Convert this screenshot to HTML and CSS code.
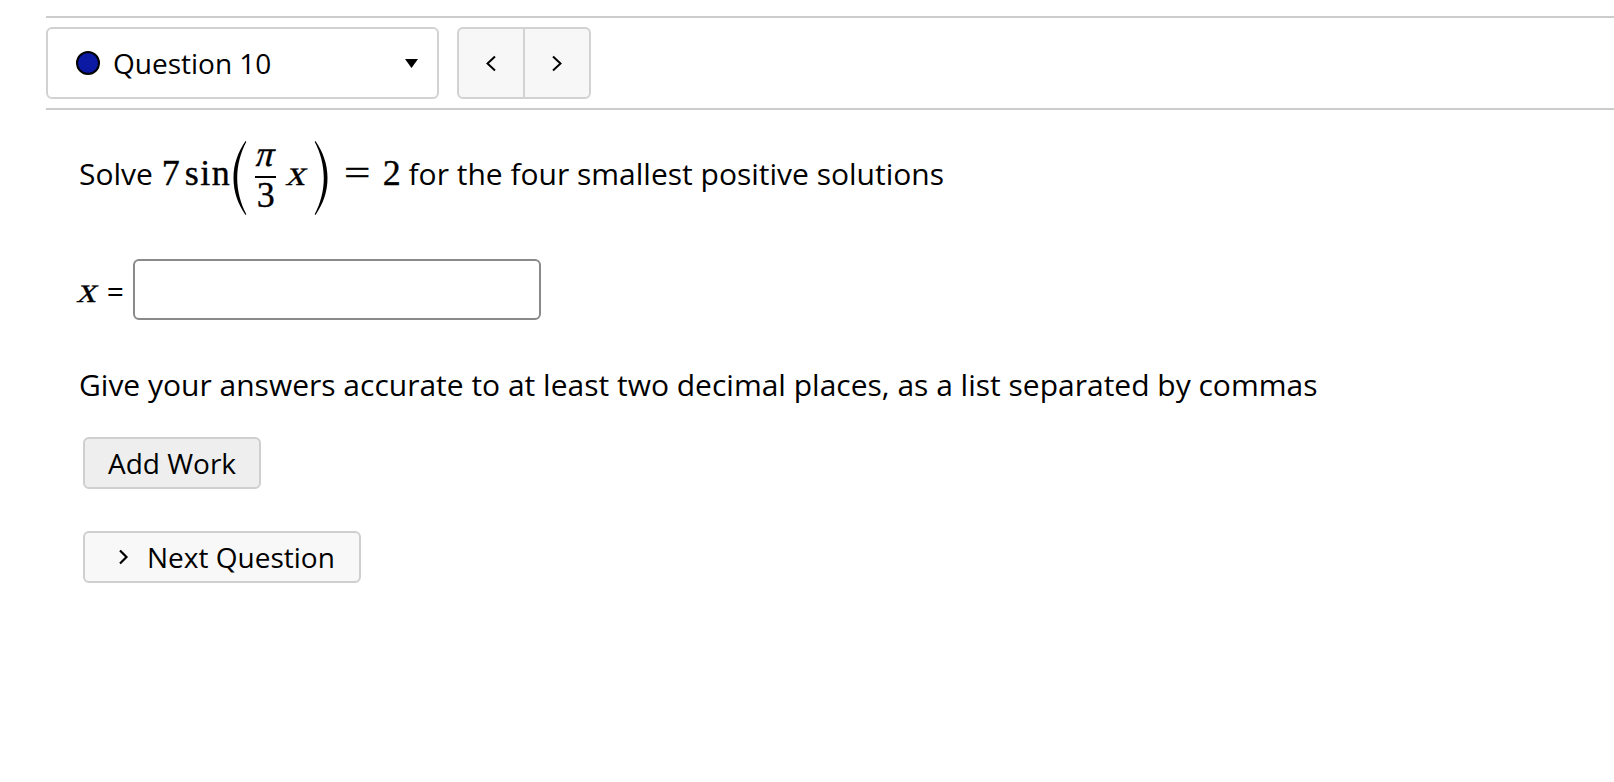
FILE: index.html
```html
<!DOCTYPE html>
<html lang="en">
<head>
<meta charset="utf-8">
<title>Question 10</title>
<link rel="stylesheet" href="styles.css">
</head>
<body>
<div class="page">
  <div class="rule"></div>
  <div class="toolbar">
    <div class="select">
      <span class="dot"></span>
      <span class="select-label">Question 10</span>
      <svg class="caret" width="13" height="9" viewBox="0 0 13 9"><polygon points="0,0 13,0 6.5,9" fill="#000"/></svg>
    </div>
    <div class="nav">
      <button class="nav-btn" type="button" aria-label="Previous">
        <svg width="12" height="17" viewBox="0 0 12 17"><polyline points="10,1.5 2.5,8.5 10,15.5" fill="none" stroke="#000" stroke-width="2"/></svg>
      </button>
      <button class="nav-btn nav-next" type="button" aria-label="Next">
        <svg width="12" height="17" viewBox="0 0 12 17"><polyline points="2,1.5 9.5,8.5 2,15.5" fill="none" stroke="#000" stroke-width="2"/></svg>
      </button>
    </div>
  </div>
  <div class="rule"></div>

  <div class="content">
    <p class="q">Solve <span class="m d7">7</span><span class="m op">sin</span><svg class="paren" width="16" height="76" viewBox="0 0 16 76"><path d="M14.5,1 C7,12 2.5,24 2.5,38 C2.5,52 7,64 14.5,75 L15.3,74.3 C9.5,63 6.2,51 6.2,38 C6.2,25 9.5,13 15.3,1.7 Z" fill="#000"/></svg><span class="frac"><span class="num m"><span class="it">π</span></span><span class="den m">3</span></span><span class="m mx xv">x</span><svg class="paren rp" width="16" height="76" viewBox="0 0 16 76"><path d="M1.5,1 C9,12 13.5,24 13.5,38 C13.5,52 9,64 1.5,75 L0.7,74.3 C6.5,63 9.8,51 9.8,38 C9.8,25 6.5,13 0.7,1.7 Z" fill="#000"/></svg><span class="m rel">=</span><span class="m">2</span> for the four smallest positive solutions</p>

    <div class="answer">
      <label class="answer-label" for="ans"><span class="m mx lx">x</span> =</label>
      <input class="answer-input" id="ans" type="text">
    </div>

    <p class="hint">Give your answers accurate to at least two decimal places, as a list separated by commas</p>

    <div class="actions">
      <button class="btn btn-work" type="button">Add Work</button>
      <button class="btn btn-next" type="button">
        <svg class="btn-icon" width="11" height="16" viewBox="0 0 11 16"><polyline points="2,1.5 8.5,8 2,14.5" fill="none" stroke="#000" stroke-width="2.2"/></svg>
        <span>Next Question</span>
      </button>
    </div>
  </div>
</div>
</body>
</html>
```
FILE: styles.css
```css
html, body {
  margin: 0;
  padding: 0;
  background: #fff;
}

body {
  font-family: "Open Sans", "Noto Sans", sans-serif;
  font-size: 28px;
  color: #000;
}

.page {
  padding: 16px 0 0 46px;
}

.rule {
  height: 2px;
  background: #cccccc;
}

.toolbar {
  display: flex;
  gap: 18px;
  padding: 9px 0 9px 0;
}

.select {
  box-sizing: border-box;
  width: 393px;
  height: 72px;
  border: 2px solid #d2d2d2;
  border-radius: 6px;
  display: flex;
  align-items: center;
  padding: 0 19px 0 28px;
  background: #fff;
}

.dot {
  box-sizing: border-box;
  width: 24px;
  height: 24px;
  border-radius: 50%;
  background: #0b19a3;
  border: 2.5px solid #000;
  flex: none;
}

.select-label {
  margin-left: 13px;
  flex: 1;
  font-size: 28px;
  line-height: 1;
}

.caret {
  flex: none;
}

.nav {
  box-sizing: border-box;
  width: 134px;
  height: 72px;
  display: flex;
  border: 2px solid #d2d2d2;
  border-radius: 6px;
  background: #f7f7f7;
  overflow: hidden;
}

.nav-btn {
  flex: 1;
  border: 0;
  margin: 0;
  padding: 0;
  background: transparent;
  display: flex;
  align-items: center;
  justify-content: center;
}

.nav-next {
  border-left: 2px solid #d2d2d2;
}

.content {
  padding-left: 33px;
}

.q {
  margin: 0;
  padding-top: 27px;
  height: 108px;
  box-sizing: border-box;
  font-size: 30px;
  line-height: 40px;
  white-space: nowrap;
}

.m {
  font-family: "Liberation Serif", "Times New Roman", serif;
  font-size: 36px;
  font-style: normal;
  -webkit-text-stroke: 0.35px #000;
}

.mx {
  display: inline-block;
  text-align: center;
  transform: skewX(-14deg) scaleX(1.08);
  -webkit-text-stroke: 0.3px #000;
}

.it {
  display: inline-block;
  transform: skewX(-14deg);
}

.d7 {
  margin-left: 1px;
}

.op {
  margin-left: 5px;
  letter-spacing: 1.5px;
}

.paren {
  vertical-align: -31px;
}

.frac {
  display: inline-flex;
  flex-direction: column;
  align-items: center;
  vertical-align: 19px;
  margin-left: 8px;
}

.num {
  display: block;
  padding: 0 1.5px 5px 1.5px;
  border-bottom: 2px solid #000;
  line-height: 34px;
}

.den {
  display: block;
  padding-top: 0;
  line-height: 34px;
}

.xv {
  width: 20px;
  margin-left: 12px;
}

.lx {
  width: 20px;
}

.rp {
  margin-left: 6px;
}

.rel {
  display: inline-block;
  transform: scaleX(1.3);
  margin: 0 15px 0 17px;
}

.answer {
  display: flex;
  align-items: center;
  margin-top: 41px;
}

.answer-label {
  width: 54px;
  flex: none;
  font-size: 30px;
  white-space: nowrap;
}

.answer-input {
  box-sizing: border-box;
  width: 408px;
  height: 61px;
  border: 2px solid #8a8a8a;
  border-radius: 6px;
  margin: 0;
  padding: 0 10px;
  font: inherit;
  background: #fff;
}

.hint {
  margin: 45px 0 0 0;
  font-size: 30px;
  line-height: 40px;
}

.actions {
  display: flex;
  flex-direction: column;
  align-items: flex-start;
  gap: 42px;
  margin-top: 32px;
  padding-left: 4px;
}

.btn {
  box-sizing: border-box;
  height: 52px;
  border: 2px solid #cfcfcf;
  border-radius: 6px;
  font-family: "Open Sans", "Noto Sans", sans-serif;
  font-size: 28px;
  color: #000;
  margin: 0;
  display: flex;
  align-items: center;
}

.btn-work {
  width: 178px;
  justify-content: center;
  background: #eeeeee;
  padding: 0;
}

.btn-next {
  width: 278px;
  background: #f8f8f8;
  padding: 0 0 0 33px;
  gap: 18px;
}

.btn-icon {
  flex: none;
}
```
